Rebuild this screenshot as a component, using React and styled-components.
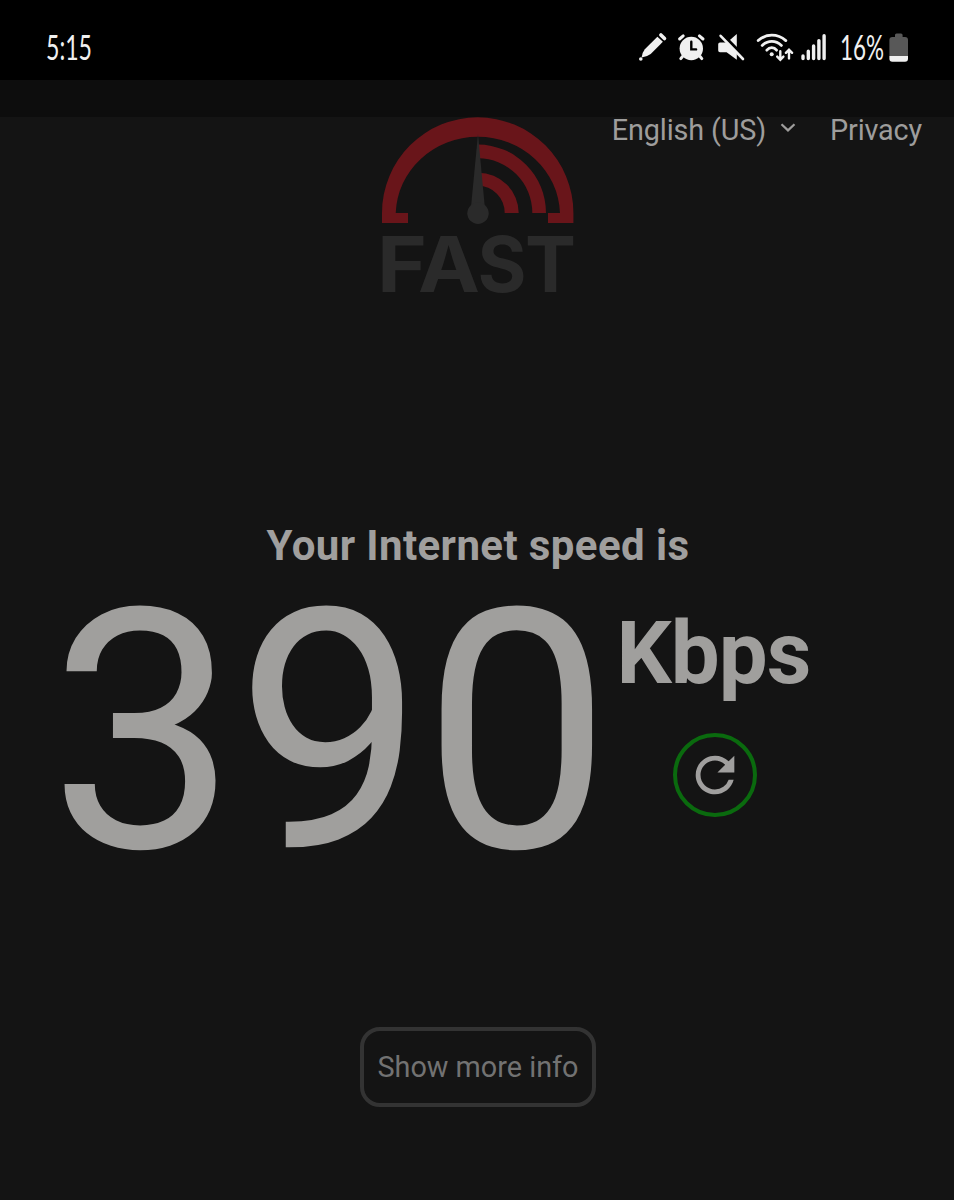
import styled, { createGlobalStyle } from "styled-components";
import { MdRefresh } from "react-icons/md";

const GlobalStyle = createGlobalStyle`
  * {
    box-sizing: border-box;
  }
  body {
    margin: 0;
    background: #141414;
    font-family: Roboto, "Liberation Sans", sans-serif;
  }
`;

const Screen = styled.div`
  display: flex;
  flex-direction: column;
  width: 954px;
  height: 1200px;
  overflow: hidden;
  background: #141414;
`;

const StatusBar = styled.div`
  display: flex;
  justify-content: space-between;
  height: 80px;
  padding: 32px 45px 0 46px;
  background: #000;
  color: #f0f0f0;
`;

const StatusText = styled.div`
  width: ${(props) => props.$width}px;
  height: 32px;
  font-family: Lato, sans-serif;
  font-size: 34px;
  font-weight: 400;
  line-height: 30px;
  white-space: nowrap;

  span {
    display: inline-block;
    transform: scaleX(${(props) => props.$squeeze});
    transform-origin: left center;
  }
`;

const StatusIcons = styled.div`
  display: flex;

  svg {
    display: block;
    flex: none;
  }
`;

const AddressStrip = styled.div`
  height: 37px;
  background: #0d0d0d;
`;

const Header = styled.header`
  display: grid;
  grid-template-columns: 1fr 192px 1fr;
  height: 404px;
`;

const Nav = styled.nav`
  grid-column: 3;
  display: flex;
  justify-content: flex-end;
  height: 26px;
  padding-right: 32px;
  color: #9e9d9c;
  font-size: 28.8px;
  letter-spacing: -0.15px;
  line-height: 26px;
  white-space: nowrap;
`;

const Language = styled.div`
  display: flex;
  margin-right: 34.5px;

  svg {
    margin: 5px 0 0 13.5px;
  }
`;

const LogoWrap = styled.div`
  grid-column: 2;
  grid-row: 1;

  svg {
    overflow: visible;
  }
`;

const Title = styled.h1`
  margin: 0;
  padding-left: 2px;
  color: #a09f9e;
  font-size: 42px;
  font-weight: 700;
  letter-spacing: 0.4px;
  line-height: 50px;
  text-align: center;
`;

const SpeedRow = styled.div`
  display: flex;
  height: 456px;
  padding: 38px 0 0 49px;
  color: #a09f9d;
`;

const SpeedValue = styled.div`
  width: 569px;
  font-size: 335px;
  letter-spacing: -1.4px;
  line-height: 247px;
  white-space: nowrap;
`;

const SpeedSide = styled.div`
  display: flex;
  flex-direction: column;
  align-items: center;
  width: 194px;
`;

const Unit = styled.div`
  padding-right: 3px;
  font-size: 87px;
  font-weight: 700;
  letter-spacing: -1px;
  line-height: 88px;
`;

const RefreshButton = styled.button`
  display: flex;
  align-items: center;
  justify-content: center;
  width: 84px;
  height: 84px;
  margin-top: 36px;
  padding: 0;
  border: 4px solid #0a6a0e;
  border-radius: 50%;
  background: none;
  color: #a09f9e;

  svg {
    flex: none;
  }
`;

const MoreButton = styled.button`
  align-self: center;
  width: 236px;
  height: 80px;
  margin-left: 2px;
  padding: 0;
  border: 4px solid #333;
  border-radius: 20px;
  background: none;
  color: #727272;
  font-family: inherit;
  font-size: 28.8px;
`;

const PencilIcon = () => (
  <svg width="38" height="30" viewBox="0 0 38 30" fill="currentColor">
    <path d="M19.4 4.8 24.9 9.8 12.7 21.9Q9 24.6 3.6 25.6 4.2 20.5 6.8 17.3Z" />
    <path d="M22.9 2.9 26.5 6.5" stroke="currentColor" strokeWidth="3.6" strokeLinecap="round" />
    <circle cx="2.8" cy="27" r="1.8" />
  </svg>
);

const AlarmIcon = () => (
  <svg width="40" height="30" viewBox="0 0 40 30" fill="none" stroke="currentColor" strokeLinecap="round">
    <circle cx="15.3" cy="16.5" r="11.7" fill="currentColor" stroke="none" />
    <path d="M3.6 7 7.2 3.9M23.4 3.9 27 7" strokeWidth="3" />
    <path d="M6.5 24.5 4.8 26.6M24.1 24.5 25.8 26.6" strokeWidth="3" />
    <path d="M15.3 9.8v7.6h4.8" stroke="#000" strokeWidth="2.4" />
  </svg>
);

const MuteIcon = () => (
  <svg width="40" height="30" viewBox="0 0 40 30">
    <path d="M4 10.5H11L20.8 2V27.8L10.6 20.3H4Q2.2 20.3 2.2 18.5V12.3Q2.2 10.5 4 10.5Z" fill="currentColor" />
    <path d="M5.5 1.6 29.4 26" stroke="#000" strokeWidth="3.4" />
    <path d="M4.6 3.8 27 27" stroke="currentColor" strokeWidth="2.6" strokeLinecap="round" />
  </svg>
);

const WifiIcon = () => (
  <svg width="45" height="30" viewBox="0 0 45 30" fill="none" stroke="currentColor" strokeWidth="2.8" strokeLinecap="round">
    <path d="M2.2 8.6Q8 3.2 15.8 3.2T29.8 8.6" />
    <path d="M6.2 13.4Q10.4 9.4 15.8 9.4T25.4 13.4" />
    <path d="M10.8 18.2Q13 15.6 15.8 15.6T20.6 18.2" />
    <circle cx="15.7" cy="22.3" r="2" fill="currentColor" stroke="none" />
    <path d="M24.3 19.2V27.4M21.2 24.6 24.3 27.8 27.4 24.6M33 26.4V18M29.9 20.8 33 17.6 36.1 20.8" strokeWidth="2.4" />
  </svg>
);

const SignalIcon = () => (
  <svg width="39" height="30" viewBox="0 0 39 30" stroke="currentColor" strokeWidth="3.4" strokeLinecap="round">
    <path d="M2 24V26.6M7.3 19.2V26.6M12.6 14V26.6M17.9 8.6V26.6M23.1 3.8V26.6" />
  </svg>
);

const BatteryIcon = () => (
  <svg width="20" height="31" viewBox="0 0 20 31">
    <path d="M6 5V3Q6 1.4 7.6 1.4H12Q13.6 1.4 13.6 3V5H16Q19 5 19 8V24H.4V8Q.4 5 3.4 5Z" fill="#585858" />
    <path d="M.4 24H19V26.7Q19 29.7 16 29.7H3.4Q.4 29.7 .4 26.7Z" fill="currentColor" />
  </svg>
);

const FastLogo = () => (
  <svg width="192" height="178" viewBox="-1 0 192 178">
    <g fill="#69151a">
      <path d="M0 106V96A95.7 95.7 0 0 1 191.4 96V106H166V96H178A82.2 79 0 0 0 13.7 96H26V106Z" />
      <path d="M96 27.6A68 68.4 0 0 1 164 96H150.3A54.3 54.7 0 0 0 96 41.3Z" />
      <path d="M96 55.7A41 40.3 0 0 1 136.7 96H122.7A27 27.3 0 0 0 96 68.7Z" />
    </g>
    <g fill="#2a2a2a">
      <path d="M96 17 102.6 88V96H89.2V88Z" />
      <circle cx="96" cy="96.3" r="10.7" />
      <g fontFamily="Inter" fontWeight="700" fontSize="76.5">
        <text x="-5" y="175" textLength="50" lengthAdjust="spacingAndGlyphs">F</text>
        <text x="36" y="175" textLength="62" lengthAdjust="spacingAndGlyphs">A</text>
        <text x="95.5" y="175" textLength="49" lengthAdjust="spacingAndGlyphs">S</text>
        <text x="143" y="175" textLength="51" lengthAdjust="spacingAndGlyphs">T</text>
      </g>
    </g>
  </svg>
);

export default function App() {
  return (
    <Screen>
      <GlobalStyle />
      <StatusBar>
        <StatusText $width={60} $squeeze={0.68}>
          <span>5:15</span>
        </StatusText>
        <StatusIcons>
          <PencilIcon />
          <AlarmIcon />
          <MuteIcon />
          <WifiIcon />
          <SignalIcon />
          <StatusText $width={49} $squeeze={0.66}>
            <span>16%</span>
          </StatusText>
          <BatteryIcon />
        </StatusIcons>
      </StatusBar>
      <AddressStrip />
      <Header>
        <LogoWrap>
          <FastLogo />
        </LogoWrap>
        <Nav>
          <Language>
            English (US)
            <svg width="16" height="12" viewBox="0 0 16 12" fill="none" stroke="currentColor" strokeWidth="2.2">
              <path d="M1.5 2.2 8 8.4 14.5 2.2" />
            </svg>
          </Language>
          <span>Privacy</span>
        </Nav>
      </Header>
      <Title>Your Internet speed is</Title>
      <SpeedRow>
        <SpeedValue>390</SpeedValue>
        <SpeedSide>
          <Unit>Kbps</Unit>
          <RefreshButton aria-label="Test again">
            <MdRefresh size={58} />
          </RefreshButton>
        </SpeedSide>
      </SpeedRow>
      <MoreButton>Show more info</MoreButton>
    </Screen>
  );
}
